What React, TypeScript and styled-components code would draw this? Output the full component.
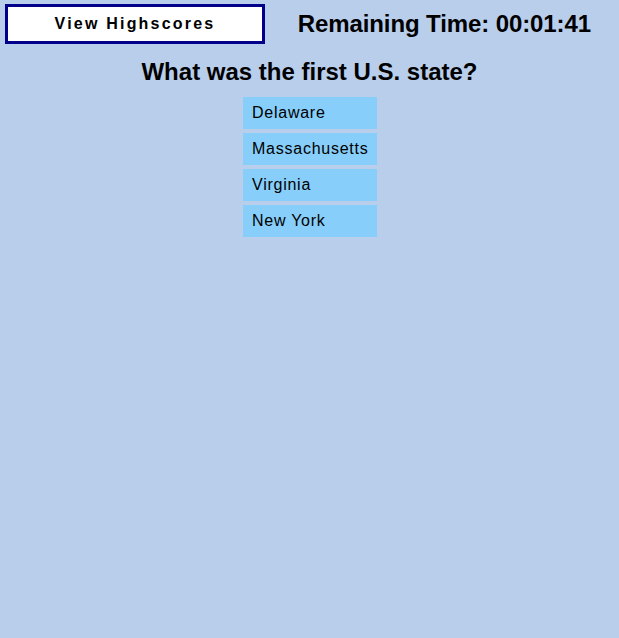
import React from "react";
import styled, { createGlobalStyle } from "styled-components";

const Global = createGlobalStyle`
  html, body { margin: 0; padding: 0; background: #b8ceeb; }
  body { font-family: "Liberation Sans", Arial, sans-serif; color: #000; min-height: 638px; }
`;

const Page = styled.div`
  display: flex;
  flex-direction: column;
  align-items: stretch;
`;

const Header = styled.header`
  display: flex;
  justify-content: space-between;
  align-items: center;
  padding: 4px 28px 0 5px;
`;

const HighscoreButton = styled.button`
  box-sizing: border-box;
  width: 260px;
  height: 40px;
  background: #fff;
  border: 3px solid #00008b;
  font-family: "Liberation Sans", Arial, sans-serif;
  font-weight: bold;
  font-size: 16px;
  letter-spacing: 2.2px;
  color: #000;
  cursor: pointer;
  padding: 0;
`;

const Timer = styled.div`
  font-weight: bold;
  font-size: 24px;
  letter-spacing: -0.1px;
`;

const Question = styled.h2`
  margin: 14px 0 11px;
  text-align: center;
  font-size: 24px;
  font-weight: bold;
  line-height: 28px;
`;

const Choices = styled.div`
  display: grid;
  gap: 4px;
  width: 134px;
  margin: 0 auto;
  padding-left: 1px;
`;

const Choice = styled.button`
  box-sizing: border-box;
  height: 32px;
  background: #87cefa;
  border: none;
  text-align: left;
  padding: 0 9px;
  font-family: "Liberation Sans", Arial, sans-serif;
  font-size: 16px;
  letter-spacing: 0.75px;
  color: #000;
  cursor: pointer;
  white-space: nowrap;
`;

const choices = ["Delaware", "Massachusetts", "Virginia", "New York"];

export default function App() {
  return (
    <Page>
      <Global />
      <Header>
        <HighscoreButton>View Highscores</HighscoreButton>
        <Timer>Remaining Time: 00:01:41</Timer>
      </Header>
      <Question>What was the first U.S. state?</Question>
      <Choices>
        {choices.map((c) => (
          <Choice key={c}>{c}</Choice>
        ))}
      </Choices>
    </Page>
  );
}
